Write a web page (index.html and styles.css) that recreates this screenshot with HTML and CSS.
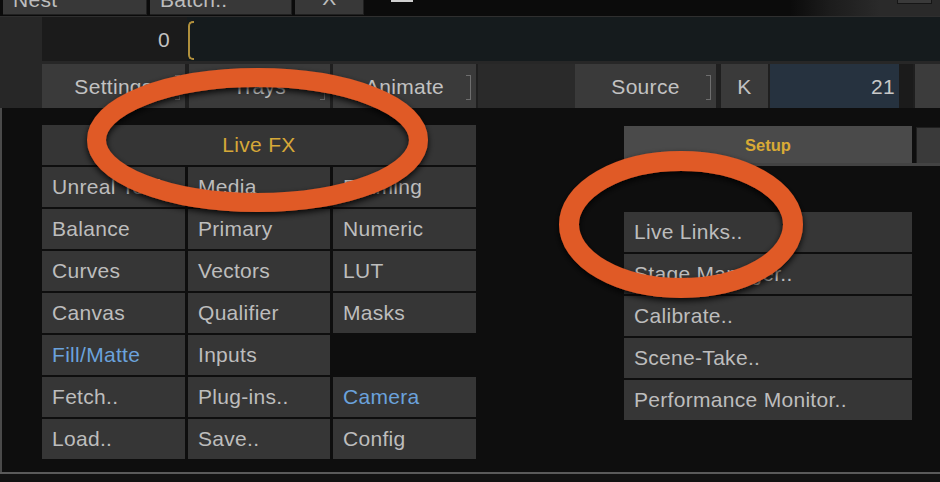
FILE: index.html
```html
<!DOCTYPE html>
<html>
<head>
<meta charset="utf-8">
<link rel="stylesheet" href="styles.css">
</head>
<body>
<div class="screen">
  <div class="topbar">
    <div class="tbtn t-nest"><span>Nest</span></div>
    <div class="tbtn t-batch"><span>Batch..</span></div>
    <div class="tbtn t-x"><span>X</span></div>
    <div class="tblack"><div class="minbar"></div></div>
    <div class="tfade"><div class="tbox"></div></div>
  </div>
  <div class="ctrl">
    <div class="row2">
      <div class="lead"></div>
      <div class="numfield">0</div>
      <div class="timeline"><div class="bracket"></div></div>
    </div>
    <div class="row3">
      <div class="lead"></div>
      <div class="btn b-set">Settings<i class="mark"></i></div>
      <div class="btn b-trays">Trays<i class="mark"></i></div>
      <div class="btn b-anim">Animate<i class="mark"></i></div>
      <div class="midfill"></div>
      <div class="btn b-src">Source<i class="mark"></i></div>
      <div class="btn b-k">K</div>
      <div class="valfield">21</div>
      <div class="darkstrip"></div>
      <div class="grayrest"></div>
    </div>
  </div>
  <div class="main">
    <div class="lpanel">
      <div class="lhead">Live FX</div>
      <div class="grid">
        <div class="cell">Unreal Tools</div>
        <div class="cell">Media</div>
        <div class="cell">Framing</div>
        <div class="cell">Balance</div>
        <div class="cell">Primary</div>
        <div class="cell">Numeric</div>
        <div class="cell">Curves</div>
        <div class="cell">Vectors</div>
        <div class="cell">LUT</div>
        <div class="cell">Canvas</div>
        <div class="cell">Qualifier</div>
        <div class="cell">Masks</div>
        <div class="cell blue">Fill/Matte</div>
        <div class="cell">Inputs</div>
        <div class="cell empty"></div>
        <div class="cell">Fetch..</div>
        <div class="cell">Plug-ins..</div>
        <div class="cell blue">Camera</div>
        <div class="cell">Load..</div>
        <div class="cell">Save..</div>
        <div class="cell">Config</div>
      </div>
    </div>
    <div class="rpanel">
      <div class="tabs">
        <div class="tab active">Setup</div>
        <div class="tab other"></div>
      </div>
      <div class="list">
        <div class="item">Live Links..</div>
        <div class="item">Stage Manager..</div>
        <div class="item">Calibrate..</div>
        <div class="item">Scene-Take..</div>
        <div class="item">Performance Monitor..</div>
      </div>
    </div>
  </div>
  <div class="footer"></div>
  <svg class="marks" viewBox="0 0 940 482" width="940" height="482">
    <defs>
      <filter id="sh" x="-20%" y="-30%" width="140%" height="160%">
        <feDropShadow dx="0" dy="3" stdDeviation="3" flood-color="#000" flood-opacity="0.85"/>
      </filter>
    </defs>
    <ellipse cx="257.5" cy="140" rx="161" ry="62.5" fill="none" stroke="#e05a27" stroke-width="19" filter="url(#sh)"/>
    <ellipse cx="681" cy="224.5" rx="112" ry="63.5" fill="none" stroke="#e05a27" stroke-width="20" filter="url(#sh)"/>
  </svg>
</div>
</body>
</html>
```
FILE: styles.css
```css
html, body {
  margin: 0;
  padding: 0;
  background: #0e0e0e;
}
.screen {
  position: relative;
  width: 940px;
  height: 482px;
  overflow: hidden;
  font-family: "Liberation Sans", Arial, sans-serif;
  font-size: 21px;
  letter-spacing: 0.3px;
  color: #bdbdbd;
  background: #0e0e0e;
}

/* top bar (cut off) */
.topbar {
  display: flex;
  height: 16px;
  padding-left: 3px;
  background: #0b0b0b;
}
.tbtn {
  height: 15px;
  display: flex;
  align-items: flex-end;
  padding: 0 10px 5px;
  box-sizing: border-box;
  overflow: hidden;
  background: #383838;
  box-shadow: inset -1px -1px 0 #202020;
  margin-right: 3px;
  line-height: 21px;
}
.t-nest { width: 144px; }
.t-batch { width: 142px; }
.t-x { width: 69px; justify-content: center; padding-bottom: 7px; }
.tblack {
  width: 423px;
  padding-left: 24px;
  box-sizing: border-box;
}
.minbar {
  width: 22px;
  height: 2px;
  background: #cfcfcf;
}
.tfade {
  flex: 1;
  height: 16px;
  padding-left: 107px;
  box-sizing: border-box;
  background: linear-gradient(to right, #0b0b0b 0, #1c1c1c 40px, #2a2a2a 90px, #2a2a2a 100%);
}
.tbox {
  width: 33px;
  height: 3px;
  background: #3a3a3a;
  border: 1px solid #161616;
  border-top: none;
}

/* controls */
.ctrl {
  background: #272727;
  border-top: 1px solid #2f2f2f;
}
.row2 {
  display: flex;
  height: 44px;
}
.lead {
  width: 42px;
  flex: none;
  background: #272727;
}
.numfield {
  width: 145px;
  background: #1b1b1b;
  text-align: right;
  padding-right: 17px;
  box-sizing: border-box;
  line-height: 46px;
  color: #c2c2c2;
}
.timeline {
  flex: 1;
  background: #151b1d;
  padding: 4px 0 1px 1px;
}
.bracket {
  width: 6px;
  height: 39px;
  box-sizing: border-box;
  border: 2px solid #b08f3c;
  border-right: none;
  border-radius: 5px 0 0 5px;
}
.row3 {
  display: flex;
  height: 44px;
  margin-top: 3px;
  background: #1f1f1f;
}
.btn {
  position: relative;
  background: #3a3a3a;
  text-align: center;
  line-height: 46px;
  color: #c2c2c2;
}
.mark {
  position: absolute;
  right: 5px;
  top: 11px;
  width: 5px;
  height: 25px;
  box-sizing: border-box;
  border: 1px solid #6e6e6e;
  border-left: none;
}
.b-set { width: 143px; }
.b-trays { width: 141px; margin-left: 4px; }
.b-anim { width: 143px; margin-left: 3px; }
.midfill { width: 97px; margin-left: 2px; background: #2a2a2a; }
.b-src { width: 141px; }
.b-k { width: 47px; margin-left: 5px; }
.valfield {
  width: 129px;
  margin-left: 2px;
  background: #26323f;
  text-align: right;
  padding-right: 4px;
  box-sizing: border-box;
  line-height: 46px;
  color: #c8c8c8;
}
.darkstrip { width: 14px; background: #1b1b1b; }
.grayrest { flex: 1; margin-left: 2px; background: #3c3c3c; }

/* main */
.main {
  display: flex;
  height: 364px;
  border-left: 2px solid #4a4a4a;
  background: #0e0e0e;
}
.lpanel {
  width: 434px;
  margin: 17px 0 0 40px;
}
.lhead {
  height: 40px;
  background: #353535;
  color: #d6a838;
  text-align: center;
  line-height: 40px;
  margin-bottom: 2px;
}
.grid {
  display: grid;
  grid-template-columns: 143px 142px 143px;
  grid-auto-rows: 40px;
  column-gap: 3px;
  row-gap: 2px;
}
.cell {
  background: #363636;
  padding-left: 10px;
  line-height: 40px;
  white-space: nowrap;
  overflow: hidden;
}
.cell.blue { color: #6ba2dc; }
.cell.empty { background: transparent; }

.rpanel {
  flex: 1;
  margin: 18px 0 0 148px;
}
.tabs {
  display: flex;
  height: 37px;
  border-bottom: 3px solid #434343;
}
.tab.active {
  width: 288px;
  background: #4a4a4a;
  color: #d9aa35;
  font-weight: bold;
  font-size: 16.5px;
  letter-spacing: 0;
  text-align: center;
  line-height: 38px;
}
.tab.other {
  flex: 1;
  margin: 1px 0 0 4px;
  background: #3a3a3a;
  border: 1px solid #1f1f1f;
  border-right: none;
  border-bottom: none;
}
.list {
  width: 288px;
  margin-top: 46px;
  display: flex;
  flex-direction: column;
  gap: 2px;
}
.item {
  height: 40px;
  line-height: 40px;
  background: #363636;
  padding-left: 10px;
}

.footer {
  height: 8px;
  border-top: 2px solid #5a5a5a;
  background: #121212;
}

.marks {
  position: absolute;
  left: 0;
  top: 0;
  pointer-events: none;
}
```
